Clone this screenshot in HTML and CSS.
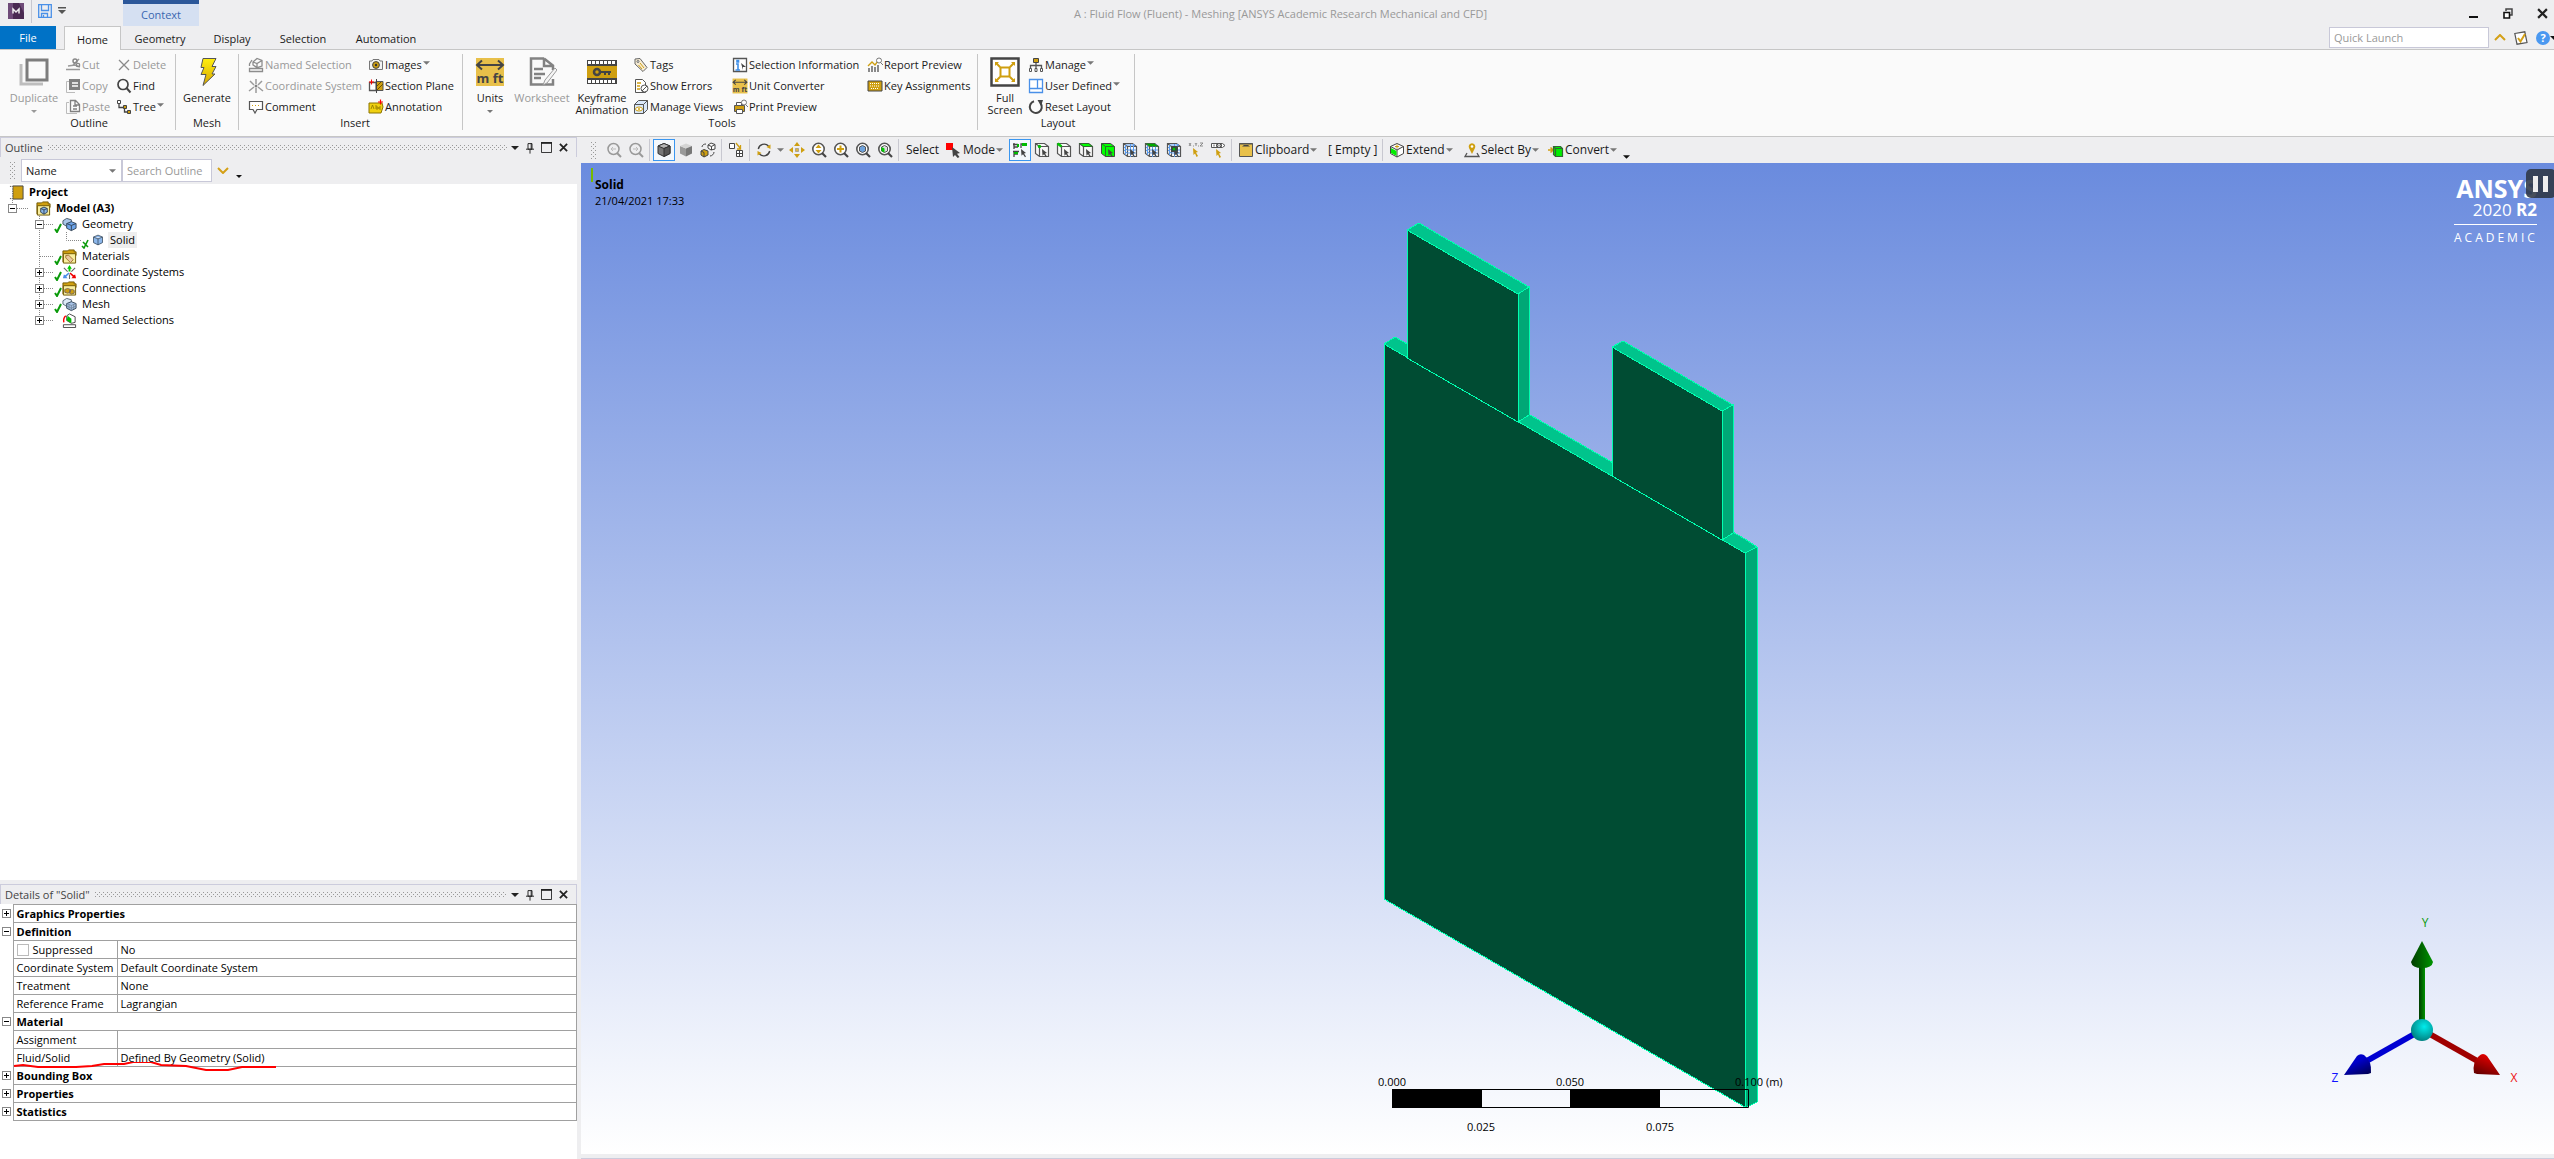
FILE: index.html
```
<!DOCTYPE html>
<html lang="en">
<head>
<meta charset="utf-8">
<title>A : Fluid Flow (Fluent) - Meshing [ANSYS Academic Research Mechanical and CFD]</title>
<link rel="stylesheet" href="styles.css">
</head>
<body>
<svg class="defs" aria-hidden="true">
<defs>
<pattern id="dots" width="4" height="4" patternUnits="userSpaceOnUse"><path d="M0 0h1v1H0zM2 2h1v1H2z" fill="#999"/></pattern>
<linearGradient id="gy"><stop offset="0" stop-color="#003c00"/><stop offset="1" stop-color="#009400"/></linearGradient>
<linearGradient id="gr" x1="0" y1="1" x2=".5" y2="0"><stop offset="0" stop-color="#500"/><stop offset="1" stop-color="#e60000"/></linearGradient>
<linearGradient id="gb" x1="1" y1="1" x2=".4" y2="0"><stop offset="0" stop-color="#000046"/><stop offset=".7" stop-color="#0000c8"/></linearGradient>
<radialGradient id="gc" cx=".6" cy=".35" r=".7"><stop offset="0" stop-color="#00ecec"/><stop offset="1" stop-color="#007b7b"/></radialGradient>
<linearGradient id="bolt" x1="0" y1="0" x2="0" y2="1"><stop offset="0" stop-color="#ffee10"/><stop offset="1" stop-color="#d8a800"/></linearGradient>
</defs>
<symbol id="caret" viewBox="0 0 8 4"><path d="M0 0h8L4 4z" fill="currentColor"/></symbol>
<symbol id="cut" viewBox="0 0 16 16"><path d="M1 12.500h14M3 9l7-1 5 2M14 2L8 8" fill="none" stroke="#999" stroke-width="1.500"/><circle cx="10" cy="4" r="2" fill="none" stroke="#888" stroke-width="1.500"/><circle cx="13" cy="8" r="1.700" fill="none" stroke="#888" stroke-width="1.300"/></symbol>
<symbol id="copy" viewBox="0 0 16 16"><path d="M4 3.500H1.500v11H10" fill="none" stroke="#bbb"/><path d="M4 1h11v11H4z" fill="#808080"/><path d="M7 5h6M7 8h6" stroke="#fff" stroke-width="1.500"/></symbol>
<symbol id="paste" viewBox="0 0 16 16"><path d="M4 3.500H1.500v11H12" fill="none" stroke="#bbb"/><path d="M5.500 1.500h5l4 4v7h-9zM10 1.500V6h4M8 7h4M8 10h4" fill="none" stroke="#808080" stroke-width="1.300"/></symbol>
<symbol id="delete" viewBox="0 0 16 16"><path d="M3 3l10 10M13 3L3 13" stroke="#8a8a8a" stroke-width="1.300"/></symbol>
<symbol id="find" viewBox="0 0 16 16"><circle cx="7" cy="6.500" r="5" fill="none" stroke="#444" stroke-width="1.700"/><path d="M10.500 10l4 4.500" stroke="#444" stroke-width="2"/></symbol>
<symbol id="treei" viewBox="0 0 16 16"><path d="M3 4v4.500h5M8.500 8.500v4.500H12" fill="none" stroke="#444" stroke-width="1.300"/><path d="M1.500 1.500h3v3h-3z" fill="#fff" stroke="#444"/><path d="M7.500 6.500h3v3h-3zM11.500 11.500h3v3h-3z" fill="#cf9f10" stroke="#444"/></symbol>
<symbol id="dup" viewBox="0 0 30 30"><path d="M2 7v20h22" fill="none" stroke="#bdbdbd" stroke-width="3"/><path d="M8 3h20v20H8z" fill="none" stroke="#7d7d7d" stroke-width="3"/></symbol>
<symbol id="boltI" viewBox="0 0 30 30"><path d="M11 1.500h13l-4 8h4l-4 7.500h3L11 28.500l3-11H9l3-7H9z" fill="url(#bolt)" stroke="#555" stroke-width="1"/></symbol>
<symbol id="nsel" viewBox="0 0 16 16"><path d="M1.500 11.500h13v3h-13zM5 5l4-3.500 5 2V9L9 10.500 5 8zM5 5l4 1.500L14 3.500M9 6.500V10M4 3L1.500 7v2" fill="none" stroke="#8c8c8c" stroke-width="1.300"/></symbol>
<symbol id="csys" viewBox="0 0 16 16"><path d="M8 1v5M8 10v5M1 13l5-4M15 13l-5-4M2 3l4 4M14 3l-4 4" stroke="#9a9a9a" stroke-width="1.500"/><circle cx="8" cy="8" r="1.500" fill="#808080"/></symbol>
<symbol id="comment" viewBox="0 0 16 16"><path d="M1.500 2.500h13v8H9L7 14l-2-3.500H1.500z" fill="#fff" stroke="#555" stroke-width="1.200"/><path d="M4 6.500h8" stroke="#cf9f10" stroke-dasharray="1 2"/></symbol>
<symbol id="camera" viewBox="0 0 16 16"><path d="M1.500 4H4l1-1.500h6L12 4h2.500v8.500h-13z" fill="#f2f2f2" stroke="#777"/><circle cx="8" cy="8" r="3.400" fill="#cf9f10" stroke="#444"/><circle cx="8" cy="8" r="1.200" fill="#333"/></symbol>
<symbol id="section" viewBox="0 0 16 16"><path d="M1.500 4.500h7v8h-7z" fill="#fff" stroke="#555" stroke-width="1.300"/><path d="M8 3.500h7v9H8z" fill="#cf9f10" stroke="#555"/><path d="M9 12l6-6M9 8l4-4" stroke="#6b5200"/><path d="M8.500 1v14" stroke="#444"/><path d="M1 4h5M3.500 1.500v5" stroke="#f00"/></symbol>
<symbol id="annot" viewBox="0 0 16 16"><path d="M1 4h13l1 4-2 6H1z" fill="#f0d010" stroke="#8b7500"/><path d="M3 10l1.500-4L6 10M8 6v4h2V8H8M13 8h-2v2h2" fill="none" stroke="#8b7500" stroke-width=".8"/><path d="M10 3h5M12.500 .5v5" stroke="#f00" stroke-width="1.200"/></symbol>
<symbol id="units" viewBox="0 0 30 30"><path d="M1 1h28v28H1z" fill="#e8c04a"/><path d="M2 8h26M7 3.500L2 8l5 4.500M23 3.500L28 8l-5 4.500" fill="none" stroke="#444" stroke-width="2"/></symbol>
<symbol id="sheet" viewBox="0 0 30 30"><path d="M17 1.500H4v26h22V22M17 1.500l9 7V13M17 2v7h8M7 12h9M7 17h11M7 21h7" fill="none" stroke="#828282" stroke-width="2.500"/><path d="M28 11L18 23l-2 5 4-2 10-13z" fill="#f5f5f5" stroke="#9a9a9a"/></symbol>
<symbol id="film" viewBox="0 0 30 30"><path d="M0 3h30v24H0z" fill="#444"/><path d="M1 5.500h28M1 24.500h28" stroke="#fff" stroke-width="3" stroke-dasharray="3 1"/><path d="M0 9h30v12H0z" fill="#cf9f10"/><circle cx="10" cy="15" r="3" fill="none" stroke="#444" stroke-width="2.500"/><path d="M13 15h11M18 15v3M22 15v3" stroke="#444" stroke-width="2"/></symbol>
<symbol id="tag" viewBox="0 0 16 16"><path d="M2 2l5-.5 7 9-4 4L2 7z" fill="#f6ecd5" stroke="#666"/><circle cx="5" cy="4.500" r="1" fill="#fff" stroke="#666"/><path d="M7 6l4 5M5.500 8l3.500 4" stroke="#cf9f10"/></symbol>
<symbol id="errs" viewBox="0 0 16 16"><path d="M2.500 1.500h7l3 3v10h-10z" fill="#fff" stroke="#555"/><path d="M4 5h4M4 8h3M4 11h3" stroke="#cf9f10" stroke-width="1.500"/><circle cx="11.500" cy="10.500" r="3.500" fill="#fff" stroke="#555"/><path d="M9 13l5-5" stroke="#555"/></symbol>
<symbol id="mviews" viewBox="0 0 16 16"><path d="M1.500 5.500l4-4h9v9l-4 4h-9z" fill="#d9e8fa" stroke="#555"/><path d="M1.500 5.500h9v9M10.500 5.500l4-4" fill="none" stroke="#555"/><ellipse cx="6" cy="10" rx="3.500" ry="2" fill="#fff" stroke="#cf9f10"/><circle cx="6" cy="10" r="1" fill="#cf9f10"/></symbol>
<symbol id="info" viewBox="0 0 16 16"><path d="M1.500 1.500h13v13h-13z" fill="#fff" stroke="#555" stroke-width="1.300"/><path d="M4 7h2v6M3.500 13H8M5 3.500h1.500v1.500H5z" fill="none" stroke="#3f8fe8" stroke-width="1.600"/><path d="M9 6l5 4h-3v3z" fill="#444"/></symbol>
<symbol id="print" viewBox="0 0 16 16"><path d="M2.500 6.500h10v6h-10z" fill="#cf9f10" stroke="#555"/><path d="M4.500 3.500h5v3h-5zM4.500 10.500h6v4h-6z" fill="#fff" stroke="#555"/><circle cx="12" cy="3.500" r="2.500" fill="#fff" stroke="#777"/><path d="M13.500 5.500L16 8" stroke="#777"/></symbol>
<symbol id="report" viewBox="0 0 16 16"><path d="M2 15v-4M5 15V9M8 15V10M11 15V8" stroke="#666" stroke-width="1.500"/><path d="M1 9l4-4 3 3 3-4" fill="none" stroke="#cf9f10" stroke-width="1.300"/><circle cx="12" cy="3.500" r="2.500" fill="#fff" stroke="#777"/><path d="M13.500 5.500L16 8" stroke="#777"/></symbol>
<symbol id="keys" viewBox="0 0 16 16"><path d="M1 3h14v10H1z" fill="#cf9f10" stroke="#444"/><path d="M3 5.500h10M3 8h10M4 10.500h8" stroke="#fff" stroke-dasharray="1 1"/></symbol>
<symbol id="full" viewBox="0 0 30 30"><path d="M1.500 1.500h27v27h-27z" fill="#fff" stroke="#444" stroke-width="2.500"/><path d="M10.500 10.500h9v9h-9zM10 10L6 6M20 10l4-4M10 20l-4 4M20 20l4 4" fill="none" stroke="#cf9f10" stroke-width="2"/><path d="M5 5h4l-4 4zM25 5h-4l4 4zM5 25h4l-4-4zM25 25h-4l4-4z" fill="#cf9f10"/></symbol>
<symbol id="manage" viewBox="0 0 16 16"><path d="M8 5v4M2.500 12V8.500h11V12M8 8v4" fill="none" stroke="#555" stroke-width="1.300"/><path d="M5.500 1.500h5v4h-5z" fill="#cf9f10" stroke="#444"/><path d="M1.500 11.500h2v3h-2zM7 11.500h2v3H7zM12.500 11.500h2v3h-2z" fill="#fff" stroke="#555"/></symbol>
<symbol id="user" viewBox="0 0 16 16"><path d="M1.500 1.500h13v13h-13zM9.500 1v9M1 10.500h13.500" fill="#fff" stroke="#4a90e8" stroke-width="1.300"/></symbol>
<symbol id="reset" viewBox="0 0 16 16"><path d="M6 2.200a6 6 0 1 0 6.500 2" fill="none" stroke="#444" stroke-width="2"/><path d="M9.500 1H15l-2 6z" fill="#444"/></symbol>
<symbol id="zoomg" viewBox="0 0 16 16"><circle cx="7.500" cy="7" r="5.500" fill="none" stroke="#999" stroke-width="1.500"/><path d="M11 11l4 4" stroke="#999" stroke-width="2"/><path d="M5 7h5M7 5L5 7l2 2" fill="none" stroke="#bbb"/></symbol>
<symbol id="zooml" viewBox="0 0 16 16"><circle cx="7.500" cy="7" r="5.500" fill="none" stroke="#999" stroke-width="1.500"/><path d="M11 11l4 4" stroke="#999" stroke-width="2"/><path d="M5 7h5M8 5l2 2-2 2" fill="none" stroke="#bbb"/></symbol>
<symbol id="cubed" viewBox="0 0 16 16"><path d="M2 4l6-2.500L14 4v7.500L8 14.500l-6-3z" fill="#777" stroke="#333"/><path d="M2 4l6 2.500L14 4 8 1.500z" fill="#b5b5b5" stroke="#333"/><path d="M8 6.500v8l6-3V4z" fill="#555" stroke="#333"/></symbol>
<symbol id="cubes" viewBox="0 0 16 16"><path d="M2 4l6 2.500v8l-6-3z" fill="#999"/><path d="M2 4l6 2.500L14 4 8 1.500z" fill="#d4d4d4"/><path d="M8 6.500v8l6-3V4z" fill="#777"/></symbol>
<symbol id="cubex" viewBox="0 0 16 16"><path d="M8 3l3-2 4 1.500V7l-4 1-3-2zM8 3l3.500 1.500L15 2.500M11.500 4.500V8" fill="#fff" stroke="#444"/><path d="M1 9l3-1.500L8 9v4l-4 2-3-2z" fill="#cf9f10" stroke="#444"/><path d="M1 9l3 1.500V15" fill="none" stroke="#444"/><path d="M2 5c0-2 2-3 4-3M14 10c0 2-2 4-4 4" fill="none" stroke="#444"/></symbol>
<symbol id="vports" viewBox="0 0 16 16"><path d="M1.500 1.500h5v5h-5zM8.500 8.500h6v6h-6zM11.500 8.500v6M8.500 11.500h6" fill="#fff" stroke="#444"/><path d="M8 1l4 5M12.500 3v4H9" fill="none" stroke="#cf9f10" stroke-width="1.300"/></symbol>
<symbol id="rot" viewBox="0 0 16 16"><path d="M2.300 7A6 6 0 0 1 12.500 4M13.700 9A6 6 0 0 1 3.500 12" fill="none" stroke="#444" stroke-width="1.400"/><path d="M14.500 2.500v4.500l-4-2zM1.500 13.500V9l4 2z" fill="#cf9f10"/></symbol>
<symbol id="pan" viewBox="0 0 16 16"><path d="M8 0l3 4H5zM8 16l3-4H5zM0 8l4-3v6zM16 8l-4-3v6z" fill="#cf9f10"/><path d="M6.500 6.500h3v3h-3z" fill="#e0b840" stroke="#777" stroke-width=".5"/></symbol>
<symbol id="lens" viewBox="0 0 16 16"><circle cx="7.500" cy="7" r="5.700" fill="#fff" stroke="#555" stroke-width="1.600"/><path d="M11 11l4 4" stroke="#444" stroke-width="2.200"/></symbol>
<symbol id="zud" viewBox="0 0 16 16"><use href="#lens"/><path d="M7.500 2.500L10.500 6h-6zM7.500 11.500L10.500 8h-6z" fill="#cf9f10"/></symbol>
<symbol id="zplus" viewBox="0 0 16 16"><use href="#lens"/><path d="M7.500 3.500v7M4 7h7" stroke="#cf9f10" stroke-width="2"/></symbol>
<symbol id="zfit" viewBox="0 0 16 16"><use href="#lens"/><path d="M4.500 5l3-1.500 3 1.500v4l-3 1.500-3-1.500z" fill="#6ea2dc" stroke="#555"/></symbol>
<symbol id="zsel" viewBox="0 0 16 16"><use href="#lens"/><path d="M4.500 5l3-1.500 3 1.500v4l-3 1.500-3-1.500z" fill="#ddd" stroke="#555"/><path d="M4.500 5l3 1.500v4l-3-1.500z" fill="#0c0"/></symbol>
<symbol id="ptr" viewBox="0 0 16 16"><path d="M8 7l5 4-2 .5 2 3-1 .8-2-3-1.500 1.500z" fill="#444"/></symbol>
<symbol id="mode" viewBox="0 0 16 16"><path d="M0 1h7v7H0z" fill="#f00"/><path d="M6 5l8 6-3 .8 2.500 3.200-1.800 1L9 13l-2 2z" fill="#444"/></symbol>
<symbol id="fourf" viewBox="0 0 16 16"><path d="M1 2.500h5M2 1v6M2 5h4M9 6V2h6M1 9.500h6M2 9v6M2 12h4" fill="none" stroke="#444" stroke-width="1.300"/><path d="M10 1h5v3h-5zM5 2h2v3H5zM2 10h4v2H2z" fill="#0b0"/><use href="#ptr" x="1" y="0"/></symbol>
<symbol id="box" viewBox="0 0 16 16"><path d="M1.500 1.500h9l4 3v10h-9l-4-3zM1.500 1.500l4 3v10M5.500 4.500h9" fill="#f8f8f8" stroke="#555" stroke-width="1.200"/></symbol>
<symbol id="bv" viewBox="0 0 16 16"><use href="#box"/><circle cx="5.500" cy="4.500" r="1.700" fill="#0b0"/><use href="#ptr"/></symbol>
<symbol id="be" viewBox="0 0 16 16"><use href="#box"/><path d="M1.500 1.500l4 3" stroke="#0c0" stroke-width="2.500"/><use href="#ptr"/></symbol>
<symbol id="bf" viewBox="0 0 16 16"><use href="#box"/><path d="M1.500 1.500h9l4 3h-9z" fill="#0f0" stroke="#363"/><use href="#ptr"/></symbol>
<symbol id="bb" viewBox="0 0 16 16"><path d="M1.500 1.500h9l4 3v10h-9l-4-3z" fill="#0f0" stroke="#444"/><path d="M1.500 1.500l4 3v10M5.500 4.500h9" fill="none" stroke="#272"/><use href="#ptr"/></symbol>
<symbol id="bn" viewBox="0 0 16 16"><use href="#box"/><path d="M8.500 2v13M11.500 2v13M3.500 3v10M2 5l3 3h9M2 8l3 3h9M4 3h9" fill="none" stroke="#5a9cf0"/><use href="#ptr"/></symbol>
<symbol id="bnf" viewBox="0 0 16 16"><use href="#bn"/><path d="M1.500 1.500h9l4 3h-9z" fill="#0a0" stroke="#464" stroke-dasharray="2 1"/></symbol>
<symbol id="bne" viewBox="0 0 16 16"><use href="#bn"/><path d="M5.500 4.500h6v5h-6z" fill="#2a5a38" stroke="#444"/><path d="M7 6h2v2H7z" fill="#0c0"/></symbol>
<symbol id="xyz" viewBox="0 0 16 16"><path d="M1 1l2 3M3 1L1 4M7 1l1 1.500L9 1M8 2.500V4M12 1h3l-3 3h3M5 4h1M10 4h1" fill="none" stroke="#777" stroke-width=".8"/><path d="M5 6l5 4-2 .5 2 3.500-1.500 1L7 11.500 5.500 13z" fill="#cf9f10"/></symbol>
<symbol id="lbl" viewBox="0 0 16 16"><path d="M1.500 1.500h11l2.500 2-2.500 2h-11zM4 2.500v2M6.500 2.500h1.500v2H6.500zM10 2.500h1.500v2H10z" fill="#fff" stroke="#555"/><path d="M6 7l5 4-2 .5 2 3.500-1.500 1L8 12.500 6.500 14z" fill="#cf9f10"/></symbol>
<symbol id="clip" viewBox="0 0 16 16"><path d="M1.500 1.500h13v13h-13z" fill="#e8c04a" stroke="#555"/><path d="M4 4.500h8L10 3H6z" fill="#444"/><path d="M1 2h14" stroke="#555"/></symbol>
<symbol id="ext" viewBox="0 0 16 16"><path d="M1.500 4.500L8 1.500l6.500 3v7L8 15l-6.500-3.500zM1.500 4.500L8 8l6.500-3.500M8 8v7" fill="#fff" stroke="#444"/><path d="M2 6l5.500 3v5L2 11z" fill="#0e0"/><path d="M8 2.500v4M6 4.500h4" stroke="#cf9f10"/></symbol>
<symbol id="pin" viewBox="0 0 16 16"><path d="M8 12L5 6a3.300 3.300 0 1 1 6 0z" fill="#cf9f10"/><circle cx="8" cy="4.500" r="1.300" fill="#fff"/><path d="M3 11l-2 3.500h14L13 11" fill="none" stroke="#555" stroke-width="1.300"/></symbol>
<symbol id="conv" viewBox="0 0 16 16"><path d="M0 8h4M2.500 5.500L5 8l-2.500 2.500" fill="none" stroke="#cf9f10" stroke-width="1.500"/><path d="M5.500 4.500h7l2 2v8h-7l-2-2zM5.500 4.500l2 2v8M7.500 6.500h7" fill="#0e0" stroke="#363" stroke-width="1.200"/></symbol>
<symbol id="book" viewBox="0 0 16 16"><path d="M4 1h11v14H4z" fill="#cf9f10" stroke="#444"/><path d="M1 1.500h3v13H1" fill="#fff" stroke="#555" stroke-dasharray="1.500 1"/></symbol>
<symbol id="folder" viewBox="0 0 16 16"><path d="M1 14V2h5l1-1h6v2h2v4" fill="#cf9f10" stroke="#705800"/><path d="M1.500 5h13v10h-13z" fill="#f8eea0" stroke="#705800"/></symbol>
<symbol id="cub" viewBox="0 0 16 16"><path d="M2 4l6-2.500L14 4v7.500L8 14.500l-6-3z" fill="#8bb6ea" stroke="#345"/><path d="M2 4l6 2.500L14 4M8 6.500v8" fill="#cfe1f8" stroke="#345"/></symbol>
<symbol id="modeli" viewBox="0 0 16 16"><use href="#folder"/><path d="M5 8l3.500-1.500L12 8v4l-3.500 2L5 12z" fill="#8bb6ea" stroke="#345"/><path d="M5 8l3.500 1.500L12 8M8.500 9.500V14" fill="none" stroke="#345"/></symbol>
<symbol id="geo" viewBox="0 0 16 16"><path d="M1 4l4-2.500L10 3v6l-5 1-4-2.500z" fill="#a9c5e8" stroke="#456"/><path d="M5 7l5-2 5 2v5l-5 2.500L5 12z" fill="#6fa5ea" stroke="#345"/><path d="M5 7l5 2 5-2M10 9v5.500" fill="none" stroke="#345"/></symbol>
<symbol id="mat" viewBox="0 0 16 16"><use href="#folder"/><path d="M4 7l3-.5 5 5-3 3-5-5z" fill="#e8c9a0" stroke="#a07030"/></symbol>
<symbol id="csc" viewBox="0 0 16 16"><path d="M2 3l4 4M14 3l-4 4M8 10v5" stroke="#666" stroke-width="1.200"/><path d="M8 0l2.500 4H9v3H7V4H5.500z" fill="#0c0"/><path d="M1 14l1-4 1.500 1L7 8l1 1-3.500 3.500L6 14z" fill="#4a8fe8"/><path d="M15 14l-1-4-1.500 1L9 8 8 9l3.500 3.500L10 14z" fill="#e00"/></symbol>
<symbol id="conn" viewBox="0 0 16 16"><use href="#folder"/><path d="M3 9l3-1 3 1v3l-3 1-3-1zM8 10l3-1 2 1v3l-3 1-2-1z" fill="#cf9f10" stroke="#765"/></symbol>
<symbol id="meshi" viewBox="0 0 16 16"><path d="M1 4l4-2.500L10 3v6l-5 1-4-2.500z" fill="#dde9f6" stroke="#567"/><path d="M5 7l5-2 5 2v5l-5 2.500L5 12z" fill="#a8c4e8" stroke="#345"/><path d="M5 7l5 2 5-2M10 9v5.500M5 9.500l5 2.500 5-2.500M7.500 8v5M12.500 8v5" fill="none" stroke="#678" stroke-width=".7"/></symbol>
<symbol id="nsc" viewBox="0 0 16 16"><path d="M1.500 12.500h13v3h-13z" fill="#fff" stroke="#444"/><path d="M5 3l3-2 6 3v6l-4 1-5-3z" fill="#fff" stroke="#444"/><path d="M6 3l4 3v5L5 8z" fill="#0b0"/><path d="M4 3Q1 6 2 10" fill="none" stroke="#f00" stroke-width="1.500"/></symbol>
<symbol id="ok" viewBox="0 0 8 10"><path d="M1 6l2 3 4-8" fill="none" stroke="#0a9a0a" stroke-width="2"/></symbol>
<symbol id="okx" viewBox="0 0 8 10"><path d="M1 7l2 2 4-8M2 3l5 5" fill="none" stroke="#0a9a0a" stroke-width="1.600"/></symbol>
<symbol id="pinw" viewBox="0 0 10 14"><path d="M2.500 1.500h5v7h-5zM6.500 1v8M0 8.500h10M5 9v5" fill="none" stroke="#222" stroke-width="1.200"/></symbol>
<symbol id="max" viewBox="0 0 12 12"><path d="M.5 .5h11v11H.5z" fill="none" stroke="#222"/><path d="M0 1h12" stroke="#222" stroke-width="2"/></symbol>
<symbol id="x" viewBox="0 0 10 10"><path d="M1 1l8 8M9 1L1 9" stroke="#222" stroke-width="2"/></symbol>
</svg>

<header class="top">
  <div class="titlebar">
    <svg class="app" viewBox="0 0 16 16"><path d="M0 0h16v16H0z" fill="#4a2a52"/><path d="M0 0h5v16H0z" fill="#6e4a78"/><path d="M11 0h5v10z" fill="#6e4a78"/><path d="M5 10.500V6l3 3 3-3v4.500" fill="none" stroke="#eee" stroke-width="1.500"/></svg>
    <span class="tsep"></span>
    <button class="tbtn" aria-label="Save"><svg width="14" height="14" viewBox="0 0 14 14"><path d="M.7 .7h12.600v12.600H.7zM3.500 1v5.500h7V1M3.500 13V9.500h6V13M5.500 11v2" fill="none" stroke="#4a90e8" stroke-width="1.300"/></svg></button>
    <button class="tbtn qat" aria-label="Customize"><svg width="8" height="7" viewBox="0 0 8 7"><path d="M0 0h8v1.500H0zM0 3h8L4 7z" fill="#555"/></svg></button>
    <span class="context">Context</span>
    <h1 class="title">A : Fluid Flow (Fluent) - Meshing [ANSYS Academic Research Mechanical and CFD]</h1>
    <div class="win">
      <button aria-label="Minimize"><svg width="10" height="10"><path d="M0 7h9v2H0z" fill="#111"/></svg></button>
      <button aria-label="Restore"><svg width="10" height="11" viewBox="0 0 10 11"><path d="M3 3V1h6v6H7" fill="none" stroke="#444" stroke-width="1.500"/><path d="M1 4.500h5.500V10H1z" fill="#fff" stroke="#111" stroke-width="1.600"/></svg></button>
      <button aria-label="Close"><svg width="11" height="11"><use href="#x"/></svg></button>
    </div>
  </div>
  <nav class="tabs">
    <button class="file">File</button>
    <button class="tab on t57">Home</button>
    <button class="tab t78">Geometry</button>
    <button class="tab t66">Display</button>
    <button class="tab t75">Selection</button>
    <button class="tab t90">Automation</button>
    <div class="right">
      <input class="quick" aria-label="Quick Launch" placeholder="Quick Launch">
      <button aria-label="Collapse"><svg width="12" height="7" viewBox="0 0 12 7"><path d="M1 6l5-5 5 5" fill="none" stroke="#d4a017" stroke-width="2"/></svg></button>
      <button aria-label="Options"><svg width="14" height="14" viewBox="0 0 14 14"><path d="M.8 2.500l10-1.700L13 11.500 3 13.200z" fill="#fff" stroke="#555" stroke-width="1.200"/><path d="M4 7l2.500 3.500L11 3" fill="none" stroke="#d4a017" stroke-width="2"/></svg></button>
      <button class="help" aria-label="Help"><b>?</b><svg width="8" height="4"><use href="#caret"/></svg></button>
    </div>
  </nav>
</header>

<section class="ribbon" aria-label="Ribbon">
  <div class="group g-outline">
    <div class="items">
      <button class="big w62 off"><svg><use href="#dup"/></svg>Duplicate<svg class="car"><use href="#caret"/></svg></button>
      <div class="col w51">
        <button class="off"><svg><use href="#cut"/></svg>Cut</button>
        <button class="off"><svg><use href="#copy"/></svg>Copy</button>
        <button class="off"><svg><use href="#paste"/></svg>Paste</button>
      </div>
      <div class="col">
        <button class="off"><svg><use href="#delete"/></svg>Delete</button>
        <button><svg><use href="#find"/></svg>Find</button>
        <button><svg><use href="#treei"/></svg>Tree<svg class="car"><use href="#caret"/></svg></button>
      </div>
    </div>
    <span class="glabel">Outline</span>
  </div>
  <div class="group g-mesh">
    <div class="items"><button class="big w62"><svg><use href="#boltI"/></svg>Generate</button></div>
    <span class="glabel">Mesh</span>
  </div>
  <div class="group g-insert">
    <div class="items">
      <div class="col w120">
        <button class="off"><svg><use href="#nsel"/></svg>Named Selection</button>
        <button class="off"><svg><use href="#csys"/></svg>Coordinate System</button>
        <button><svg><use href="#comment"/></svg>Comment</button>
      </div>
      <div class="col">
        <button><svg><use href="#camera"/></svg>Images<svg class="car"><use href="#caret"/></svg></button>
        <button><svg><use href="#section"/></svg>Section Plane</button>
        <button><svg><use href="#annot"/></svg>Annotation</button>
      </div>
    </div>
    <span class="glabel">Insert</span>
  </div>
  <div class="group g-tools">
    <div class="items">
      <button class="big w46"><svg><use href="#units"/><text x="15" y="26" text-anchor="middle" class="uft">m ft</text></svg>Units<svg class="car"><use href="#caret"/></svg></button>
      <button class="big w58 off"><svg><use href="#sheet"/></svg>Worksheet</button>
      <button class="big w62"><svg><use href="#film"/></svg>Keyframe<br>Animation</button>
      <div class="col w99">
        <button><svg><use href="#tag"/></svg>Tags</button>
        <button><svg><use href="#errs"/></svg>Show Errors</button>
        <button><svg><use href="#mviews"/></svg>Manage Views</button>
      </div>
      <div class="col w135">
        <button><svg><use href="#info"/></svg>Selection Information</button>
        <button><svg viewBox="0 0 30 30"><use href="#units"/><text x="15" y="26" text-anchor="middle" class="uft">m ft</text></svg>Unit Converter</button>
        <button><svg><use href="#print"/></svg>Print Preview</button>
      </div>
      <div class="col">
        <button><svg><use href="#report"/></svg>Report Preview</button>
        <button><svg><use href="#keys"/></svg>Key Assignments</button>
      </div>
    </div>
    <span class="glabel">Tools</span>
  </div>
  <div class="group g-layout">
    <div class="items">
      <button class="big w46"><svg><use href="#full"/></svg>Full<br>Screen</button>
      <div class="col">
        <button><svg><use href="#manage"/></svg>Manage<svg class="car"><use href="#caret"/></svg></button>
        <button><svg><use href="#user"/></svg>User Defined<svg class="car"><use href="#caret"/></svg></button>
        <button><svg><use href="#reset"/></svg>Reset Layout</button>
      </div>
    </div>
    <span class="glabel">Layout</span>
  </div>
</section>

<main class="work">
  <aside class="side">
    <section class="outline">
      <div class="phead"><h2>Outline</h2><svg class="dots"><rect width="100%" height="5" fill="url(#dots)"/></svg>
        <button aria-label="Menu"><svg width="8" height="4"><use href="#caret"/></svg></button><button aria-label="Pin"><svg width="8" height="12"><use href="#pinw"/></svg></button><button aria-label="Maximize"><svg width="11" height="11"><use href="#max"/></svg></button><button aria-label="Close"><svg width="9" height="9"><use href="#x"/></svg></button></div>
      <div class="search">
        <svg class="grip"><rect width="5" height="18" fill="url(#dots)"/></svg>
        <span class="selwrap"><select aria-label="Search by"><option>Name</option></select><svg class="car"><use href="#caret"/></svg></span>
        <input aria-label="Search Outline" placeholder="Search Outline">
        <button aria-label="Expand"><svg width="12" height="7" viewBox="0 0 12 7"><path d="M1 1l5 5 5-5" fill="none" stroke="#d4a017" stroke-width="2"/></svg></button>
        <button class="low" aria-label="More"><svg width="6" height="3"><use href="#caret"/></svg></button>
      </div>
      <div class="treebox">
        <svg class="lines" width="100" height="150"><path d="M12.500 16v4M17 24.500h11M39.500 32v104M44 40.500h10M66.500 48v8.500H82M40 72.500h14M44 88.500h10M44 104.500h10M44 120.500h10M44 136.500h10" fill="none" stroke="#888" stroke-dasharray="1 1"/></svg>
        <ul class="tree">
          <li class="l0"><svg><use href="#book"/></svg><b>Project</b></li>
          <li class="l1"><button class="exp" aria-label="Collapse"><svg><path d="M1 3h5v1H1z"/></svg></button><svg><use href="#modeli"/></svg><b>Model (A3)</b></li>
          <li class="l2"><button class="exp" aria-label="Collapse"><svg><path d="M1 3h5v1H1z"/></svg></button><svg class="ok"><use href="#ok"/></svg><svg><use href="#geo"/></svg><span>Geometry</span></li>
          <li class="l3"><svg class="ok"><use href="#okx"/></svg><svg class="sm"><use href="#cub"/></svg><span class="cur">Solid</span></li>
          <li class="l2"><span class="exp none"></span><svg class="ok"><use href="#ok"/></svg><svg><use href="#mat"/></svg><span>Materials</span></li>
          <li class="l2"><button class="exp" aria-label="Expand"><svg><path d="M1 3h5v1H1zM3 1h1v5H3z"/></svg></button><svg class="ok"><use href="#ok"/></svg><svg><use href="#csc"/></svg><span>Coordinate Systems</span></li>
          <li class="l2"><button class="exp" aria-label="Expand"><svg><path d="M1 3h5v1H1zM3 1h1v5H3z"/></svg></button><svg class="ok"><use href="#ok"/></svg><svg><use href="#conn"/></svg><span>Connections</span></li>
          <li class="l2"><button class="exp" aria-label="Expand"><svg><path d="M1 3h5v1H1zM3 1h1v5H3z"/></svg></button><svg class="ok"><use href="#ok"/></svg><svg><use href="#meshi"/></svg><span>Mesh</span></li>
          <li class="l2"><button class="exp" aria-label="Expand"><svg><path d="M1 3h5v1H1zM3 1h1v5H3z"/></svg></button><svg class="ok"></svg><svg><use href="#nsc"/></svg><span>Named Selections</span></li>
        </ul>
      </div>
    </section>
    <section class="details">
      <div class="phead"><h2>Details of "Solid"</h2><svg class="dots"><rect width="100%" height="5" fill="url(#dots)"/></svg>
        <button aria-label="Menu"><svg width="8" height="4"><use href="#caret"/></svg></button><button aria-label="Pin"><svg width="8" height="12"><use href="#pinw"/></svg></button><button aria-label="Maximize"><svg width="11" height="11"><use href="#max"/></svg></button><button aria-label="Close"><svg width="9" height="9"><use href="#x"/></svg></button></div>
      <table>
        <colgroup><col class="c0"><col class="c1"><col></colgroup>
        <tr><td class="e"><button class="exp" aria-label="Expand"><svg><path d="M1 3h5v1H1zM3 1h1v5H3z"/></svg></button></td><th colspan="2">Graphics Properties</th></tr>
        <tr><td class="e"><button class="exp" aria-label="Collapse"><svg><path d="M1 3h5v1H1z"/></svg></button></td><th colspan="2">Definition</th></tr>
        <tr><td class="e"></td><td><label><input type="checkbox">Suppressed</label></td><td>No</td></tr>
        <tr><td class="e"></td><td>Coordinate System</td><td>Default Coordinate System</td></tr>
        <tr><td class="e"></td><td>Treatment</td><td>None</td></tr>
        <tr><td class="e"></td><td>Reference Frame</td><td>Lagrangian</td></tr>
        <tr><td class="e"><button class="exp" aria-label="Collapse"><svg><path d="M1 3h5v1H1z"/></svg></button></td><th colspan="2">Material</th></tr>
        <tr><td class="e"></td><td>Assignment</td><td></td></tr>
        <tr class="mark"><td class="e"></td><td>Fluid/Solid<svg class="red" width="270" height="12" viewBox="0 0 270 12"><path d="M1 4l9-1 15 2h38l16-1 12-2h20l9-2h18l10 3 25 1 20 4h22l14-3h34" fill="none" stroke="#f00" stroke-width="2"/></svg></td><td>Defined By Geometry (Solid)</td></tr>
        <tr><td class="e"><button class="exp" aria-label="Expand"><svg><path d="M1 3h5v1H1zM3 1h1v5H3z"/></svg></button></td><th colspan="2">Bounding Box</th></tr>
        <tr><td class="e"><button class="exp" aria-label="Expand"><svg><path d="M1 3h5v1H1zM3 1h1v5H3z"/></svg></button></td><th colspan="2">Properties</th></tr>
        <tr><td class="e"><button class="exp" aria-label="Expand"><svg><path d="M1 3h5v1H1zM3 1h1v5H3z"/></svg></button></td><th colspan="2">Statistics</th></tr>
      </table>
    </section>
  </aside>

  <section class="stage">
    <div class="toolbar">
      <svg class="grip"><rect width="5" height="17" fill="url(#dots)"/></svg>
      <button class="ic" aria-label="Previous view"><svg><use href="#zoomg"/></svg></button>
      <button class="ic" aria-label="Next view"><svg><use href="#zooml"/></svg></button>
      <i></i>
      <button class="ic act" aria-label="Shaded with edges"><svg><use href="#cubed"/></svg></button>
      <button class="ic" aria-label="Shaded"><svg><use href="#cubes"/></svg></button>
      <button class="ic" aria-label="Swap view"><svg><use href="#cubex"/></svg></button>
      <i></i>
      <button class="ic" aria-label="Viewports"><svg><use href="#vports"/></svg></button>
      <i></i>
      <button class="ic" aria-label="Rotate"><svg><use href="#rot"/></svg></button>
      <button class="dd" aria-label="Rotate options"><svg class="car"><use href="#caret"/></svg></button>
      <button class="ic" aria-label="Pan"><svg><use href="#pan"/></svg></button>
      <button class="ic" aria-label="Zoom"><svg><use href="#zud"/></svg></button>
      <button class="ic" aria-label="Box zoom"><svg><use href="#zplus"/></svg></button>
      <button class="ic" aria-label="Zoom to fit"><svg><use href="#zfit"/></svg></button>
      <button class="ic" aria-label="Zoom to selection"><svg><use href="#zsel"/></svg></button>
      <i></i>
      <span class="lab w41">Select</span>
      <button class="tx w66"><svg><use href="#mode"/></svg>Mode<svg class="car"><use href="#caret"/></svg></button>
      <button class="ic act" aria-label="Smart select"><svg><use href="#fourf"/></svg></button>
      <button class="ic" aria-label="Vertex"><svg><use href="#bv"/></svg></button>
      <button class="ic" aria-label="Edge"><svg><use href="#be"/></svg></button>
      <button class="ic" aria-label="Face"><svg><use href="#bf"/></svg></button>
      <button class="ic" aria-label="Body"><svg><use href="#bb"/></svg></button>
      <button class="ic" aria-label="Node"><svg><use href="#bn"/></svg></button>
      <button class="ic" aria-label="Element face"><svg><use href="#bnf"/></svg></button>
      <button class="ic" aria-label="Element"><svg><use href="#bne"/></svg></button>
      <button class="ic" aria-label="Coordinates"><svg><use href="#xyz"/></svg></button>
      <button class="ic" aria-label="Label"><svg><use href="#lbl"/></svg></button>
      <i></i>
      <button class="tx w89"><svg><use href="#clip"/></svg>Clipboard<svg class="car"><use href="#caret"/></svg></button>
      <span class="lab w56">[ Empty ]</span>
      <i></i>
      <button class="tx w75"><svg><use href="#ext"/></svg>Extend<svg class="car"><use href="#caret"/></svg></button>
      <button class="tx w84"><svg><use href="#pin"/></svg>Select By<svg class="car"><use href="#caret"/></svg></button>
      <button class="tx w75"><svg><use href="#conv"/></svg>Convert<svg class="car"><use href="#caret"/></svg></button>
      <button class="over" aria-label="More"><svg class="car"><use href="#caret"/></svg></button>
    </div>
    <div class="view">
      <div class="note"><b>Solid</b><span>21/04/2021 17:33</span></div>
      <svg class="model" width="380" height="892" viewBox="1380 220 380 892">
        <g stroke="#00ffb0" stroke-width="1" stroke-linejoin="round" shape-rendering="crispEdges">
          <path d="M1384 344l11-7 350 202 12 8-12 7z" fill="#00c48c"/>
          <path d="M1384 344l361 209v554L1384 899z" fill="#004c33"/>
          <path d="M1745 553l12-6v555l-12 6z" fill="#00a876"/>
        </g>
        <g stroke="#00ffb0" stroke-width="1" shape-rendering="crispEdges">
          <path d="M1407 230l12-7 110 64-11 7z" fill="#00c48c"/>
          <path d="M1407 230l111 64v128l-111-64z" fill="#004c33"/>
          <path d="M1518 294l11-7v128l-11 7z" fill="#00a876"/>
          <path d="M1612 347l11-6 110 64-11 6z" fill="#00c48c"/>
          <path d="M1612 347l110 64v129l-110-64z" fill="#004c33"/>
          <path d="M1722 411l11-6v128l-11 7z" fill="#00a876"/>
        </g>
      </svg>
      <svg class="ruler" width="420" height="64" viewBox="1370 1072 420 64">
        <path d="M1392 1088h90v19h-90zM1570 1088h90v19h-90z"/><path d="M1392.500 1088.500h356v18h-356z" fill="none" stroke="#000"/>
        <g text-anchor="middle"><text x="1392" y="1085">0.000</text><text x="1570" y="1085">0.050</text><text x="1735" y="1085" text-anchor="start">0.100 (m)</text><text x="1481" y="1130">0.025</text><text x="1660" y="1130">0.075</text></g>
      </svg>
      <svg class="triad" width="200" height="180" viewBox="2326 910 200 180">
        <path d="M2419 962h6v60h-6z" fill="url(#gy)"/>
        <path d="M2422 940l11 21q-1 6-11 6t-11-6z" fill="url(#gy)"/>
        <path d="M2412 1031l-46 26 3 5 46-26z" fill="#0000d2"/>
        <path d="M2344 1074l13-19q3-3 7-1 8 6 7 18l-3 1z" fill="url(#gb)"/>
        <path d="M2432 1031l46 26-3 5-46-26z" fill="#a00000"/>
        <path d="M2500 1074l-13-19q-4-4-8 0-7 6-5 17l3 1z" fill="url(#gr)"/>
        <circle cx="2422" cy="1029" r="11" fill="url(#gc)"/>
        <g text-anchor="middle"><text x="2425" y="926" fill="#0a9a0a">Y</text><text x="2335" y="1081" fill="#11f">Z</text><text x="2514" y="1081" fill="#e11">X</text></g>
      </svg>
      <div class="brand"><strong>ANSYS</strong><span class="rel">2020 <b>R2</b></span><span class="acad">ACADEMIC</span></div>
      <button class="pause" aria-label="Pause"><svg width="16" height="16"><path d="M0 0h5v16H0zM10 0h5v16h-5z" fill="#eee"/></svg></button>
    </div>
  </section>
</main>
</body>
</html>
```
FILE: styles.css
```
* { box-sizing: border-box; }
body { margin: 0; height: 100vh; display: flex; flex-direction: column; overflow: hidden; background: #eeeef0; color: #1a1a1a; font: 11px/14px "Open Sans", "Noto Sans", sans-serif; }
button { display: flex; align-items: center; margin: 0; padding: 0; border: 0; background: none; color: inherit; font: inherit; white-space: nowrap; }
svg { flex: none; display: block; }
h1, h2 { margin: 0; font: inherit; }
.defs { position: absolute; width: 0; height: 0; }
.car { width: 7px; height: 4px; color: #777; }

/* title bar */
.titlebar { display: flex; height: 26px; align-items: flex-start; position: relative; }
.app { width: 16px; height: 16px; margin: 3px 7px 0 8px; }
.tsep { width: 1px; height: 23px; background: #c8c8d0; }
.tbtn { margin: 4px 0 0 6px; }
.qat { margin-top: 7px; }
.context { width: 76px; height: 26px; margin-left: 57px; border-top: 4px solid #2b579a; background: #d5e0f2; color: #3a67b0; text-align: center; line-height: 22px; }
.title { flex: 1; padding-right: 192px; text-align: center; color: #999; line-height: 28px; }
.win { position: absolute; right: 6px; top: 8px; display: flex; gap: 24px; }

.tabs { display: flex; height: 24px; border-bottom: 1px solid #c6c6c6; }
.file { width: 56px; height: 23px; margin-right: 8px; justify-content: center; background: #0072c6; color: #fff; }
.tab { justify-content: center; height: 24px; padding-top: 2px; }
.tab.on { border: 1px solid #c6c6c6; border-bottom: 0; background: #fafafa; }
.t57 { width: 57px; } .t78 { width: 78px; } .t66 { width: 66px; } .t75 { width: 76px; } .t90 { width: 90px; }
.right { display: flex; align-items: center; margin-left: auto; gap: 8px; }
.quick { width: 160px; height: 21px; margin-right: -3px; }
input, select { border: 1px solid #c8c8d8; border-radius: 0; background: #fff; font: inherit; padding: 0 4px; color: #1a1a1a; outline: 0; }
::placeholder { color: #999; opacity: 1; }
.help { width: 18px; overflow: hidden; }
.help b { flex: none; width: 14px; height: 14px; border-radius: 7px; background: #4a98f0; color: #fff; text-align: center; }
.help svg { color: #111; }

/* ribbon */
.ribbon { display: flex; height: 87px; padding: 4px 0 6px; background: #fafafa; border-bottom: 1px solid #c6c6c6; }
.group { display: flex; flex-direction: column; border-right: 1px solid #c6c6c6; }
.items { display: flex; flex: none; height: 63px; }
.glabel { text-align: center; line-height: 12px; }
.g-outline { width: 176px; padding-left: 3px; } .g-mesh { width: 63px; } .g-insert { width: 224px; padding-left: 9px; }
.g-tools { width: 515px; padding-left: 4px; } .g-layout { width: 157px; padding-left: 4px; }
.col button { height: 21px; gap: 1px; }
.col svg { width: 16px; height: 16px; }
.col .car { width: 7px; height: 4px; margin-top: -4px; }
.big { flex-direction: column; line-height: 12px; padding-top: 3px; text-align: center; }
.big svg { width: 30px; height: 30px; margin-bottom: 5px; }
.big .car { width: 6px; height: 3px; margin-top: 6px; }
.off, .off .car { color: #999; }
.w62 { width: 62px; } .w51 { width: 51px; } .w120 { width: 120px; } .w46 { width: 46px; } .w58 { width: 58px; } .w99 { width: 99px; } .w135 { width: 135px; }
.uft { font: bold 13px "Open Sans", sans-serif; fill: #444; }

.work { display: flex; flex: 1; min-height: 0; }

/* left panels */
.side { display: flex; flex-direction: column; width: 577px; flex: none; }
.outline { flex: 1; display: flex; flex-direction: column; }
.phead { display: flex; align-items: center; height: 20px; border: 1px solid #ccccdc; border-bottom: 0; padding: 0 8px 0 4px; color: #444; }
.phead button { margin-left: 7px; color: #222; }
.phead button:first-of-type { margin-left: 4px; }
.dots { flex: 1; height: 5px; margin-left: 5px; min-width: 0; }
.search { display: flex; align-items: center; height: 27px; padding-left: 10px; }
.grip { width: 5px; height: 18px; }
.selwrap { display: flex; align-items: center; margin-left: 6px; }
.selwrap .car { margin-left: -13px; }
.selwrap select { width: 101px; height: 23px; appearance: none; }
.search input { width: 90px; height: 23px; margin: 0 5px 0 6px; }
.low { margin: 11px 0 0 7px; color: #111; }
.treebox { position: relative; flex: 1; background: #fff; }
.lines { position: absolute; left: 0; top: 0; }
.tree { position: relative; margin: 0; padding: 0; list-style: none; color: #000; }
.tree li { display: flex; align-items: center; height: 16px; }
.tree svg { width: 15px; height: 15px; }
.tree .ok { width: 8px; height: 10px; margin-top: 8px; }
.tree .sm { width: 12px; height: 12px; margin: 0 4px 0 3px; }
.tree b, .tree li > span:last-child { margin-left: 5px; line-height: 16px; }
.tree li > .cur:last-child { background: #eee; padding: 0 2px; margin-left: 0; }
.exp { flex: none; width: 9px; height: 9px; justify-content: center; border: 1px solid #888; background: #fff; }
.exp svg, .tree .exp svg { width: 7px; height: 7px; }
.none { visibility: hidden; }
.l0 { padding-left: 9px; }
.l1 { padding-left: 8px; } .l1 .exp { margin-right: 19px; }
.l2 { padding-left: 35px; } .l2 .exp { margin-right: 10px; }
.l3 { padding-left: 81px; }

.details { height: 275px; flex: none; margin-top: 4px; background: #fff; }
.details .phead { background: #eeeef0; }
table { width: 577px; table-layout: fixed; border-collapse: collapse; color: #000; }
.c0 { width: 13px; } .c1 { width: 104px; }
tr { height: 18px; }
th, td { padding: 0 0 0 3px; border: 1px solid #a0a0a0; text-align: left; line-height: 17px; white-space: nowrap; }
td.e { border: 0; padding: 0 0 0 2px; }
label { display: flex; align-items: center; gap: 4px; }
input[type=checkbox] { appearance: none; width: 12px; height: 12px; margin: 0; padding: 0; border: 1px solid #bbb; }
.mark td { position: relative; }
.red { position: absolute; left: -1px; top: 13px; z-index: 1; }

/* graphics window */
.stage { display: flex; flex-direction: column; flex: 1; margin-left: 4px; min-width: 0; border-bottom: 1px solid #ccccdc; }
.toolbar { display: flex; align-items: center; height: 26px; padding-left: 10px; }
.toolbar .grip { margin-right: 7px; height: 17px; }
.toolbar svg:not(.grip):not(.car) { width: 16px; height: 16px; }
.toolbar i { width: 1px; height: 22px; margin: 0 3px 0 2px; background: #c8c8d0; }
.ic { width: 22px; height: 22px; justify-content: center; }
.act { border: 1px solid #3a96f0; background: #f4f8fc; }
.dd { width: 11px; justify-content: center; }
.lab, .tx { font-size: 12px; }
.lab { padding-left: 4px; }
.tx { gap: 1px; padding-left: 3px; }
.w41 { width: 41px; } .w66 { width: 66px; } .w89 { width: 89px; } .w56 { width: 56px; } .w75 { width: 75px; } .w84 { width: 84px; }
.over .car { margin-top: 14px; color: #111; }
.over { margin-left: 3px; }
.view { position: relative; flex: 1; margin-bottom: 4px; background: linear-gradient(#6a8bde, #fff); overflow: hidden; color: #000; }
.note { position: absolute; left: 10px; top: 5px; display: flex; flex-direction: column; padding: 9px 0 0 4px; line-height: 16px; }
.note::before { content: ""; position: absolute; left: 0; top: 0; width: 2px; height: 14px; background: #76b900; }
.note b { font-size: 12px; }
.model { position: absolute; left: calc(50% - 188px); top: 57px; }
.ruler { position: absolute; left: calc(50% - 198px); bottom: 17px; font-size: 11px; }
.triad { position: absolute; right: 28px; bottom: 63px; font-size: 12px; }
.brand { position: absolute; right: 17px; top: 12px; width: 83px; display: flex; flex-direction: column; align-items: flex-end; color: #fff; }
.brand strong { font-size: 25px; line-height: 26px; }
.rel { font-size: 17px; line-height: 18px; padding-bottom: 5px; }
.acad { align-self: stretch; border-top: 1px solid #fff; font-size: 12px; line-height: 26px; letter-spacing: 3px; white-space: nowrap; }
.pause { position: absolute; right: -2px; top: 6px; width: 30px; height: 29px; border-radius: 5px; justify-content: center; background: rgba(45, 55, 68, .88); }
```
